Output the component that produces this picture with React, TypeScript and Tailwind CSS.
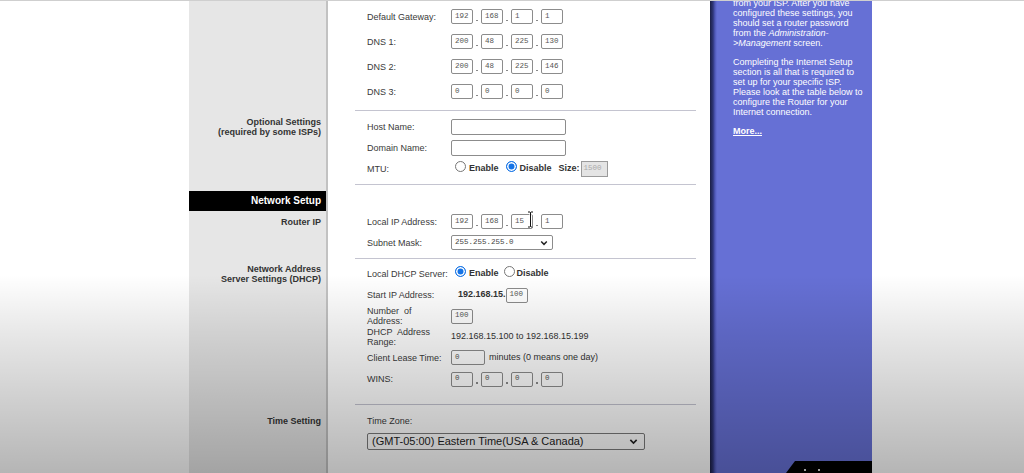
import type { ReactNode } from "react";

const MONO = "font-['Liberation_Mono',monospace]";

function IpBox({ v, w = "w-[22px]" }: { v: string; w?: string }) {
  return (
    <span className={`flex items-center ${w} h-[15px] border border-[#8c8c8c] rounded-[2px] bg-white pl-[3px] ${MONO} text-[7.5px] text-[#555] leading-none`}>
      {v}
    </span>
  );
}

function Ip({ parts, cursor }: { parts: string[]; cursor?: boolean }) {
  return (
    <div className="flex items-center">
      {parts.map((p, i) => (
        <div key={i} className="flex items-center">
          {i > 0 && (
            <span className="w-[8px] h-[15px] flex items-end justify-center pb-[3px]">
              <span className="w-[1.5px] h-[1.5px] bg-[#8a8a8a]" />
            </span>
          )}
          <div className="relative">
            <IpBox v={p} />
            {cursor && i === 2 && (
              <svg className="absolute left-[16px] top-[-3px]" width="7" height="17" viewBox="0 0 7 17">
                <path d="M1 1h2l.5.5L4 1h2M3.5 1.5v14M1 16h2l.5-.5.5.5h2" fill="none" stroke="#fff" strokeWidth="2.2" />
                <path d="M1 1h2l.5.5L4 1h2M3.5 1.5v14M1 16h2l.5-.5.5.5h2" fill="none" stroke="#111" strokeWidth="1" />
              </svg>
            )}
          </div>
        </div>
      ))}
    </div>
  );
}

function Radio({ on }: { on?: boolean }) {
  return on ? (
    <span className="inline-block w-[11px] h-[11px] rounded-full bg-[#1473e6] border border-[#1473e6] shadow-[inset_0_0_0_1.5px_#ffffff]" />
  ) : (
    <span className="inline-block w-[11px] h-[11px] rounded-full bg-white border border-[#767676]" />
  );
}

function Row({ label, h, children }: { label: ReactNode; h: string; children?: ReactNode }) {
  return (
    <div className={`flex items-center ${h} pl-[39px]`}>
      <div className="w-[84px] shrink-0 text-[9px] leading-[10px] text-[#3a3a3a]">{label}</div>
      {children}
    </div>
  );
}

function Sep({ mt }: { mt: string }) {
  return <div className={`${mt} ml-[27px] w-[341px] h-px bg-[#c4c4d0]`} />;
}

function Left({ children, className = "" }: { children?: ReactNode; className?: string }) {
  return (
    <div className={`w-[139px] shrink-0 bg-[#e6e6e6] border-r-2 border-[#c2c2c2] text-right text-[9px] leading-[10px] font-bold text-[#333] ${className}`}>
      {children}
    </div>
  );
}

function Chevron({ size = 8 }: { size?: number }) {
  return (
    <svg width={size} height={size} viewBox="0 0 10 10">
      <path d="M1.5 3.2 5 6.7 8.5 3.2" fill="none" stroke="#222" strokeWidth="1.8" />
    </svg>
  );
}

export default function App() {
  return (
    <div className="relative w-[1024px] h-[473px] overflow-hidden bg-white border-t border-[#cfcfcf] font-['Liberation_Sans',Arial,sans-serif]">
      <div className="flex h-full">
        <div className="w-[189px] shrink-0" />

        {/* settings table */}
        <div className="w-[521px] shrink-0 flex flex-col">
          {/* internet settings */}
          <div className="flex">
            <Left />
            <div className="w-[382px] pt-[3px]">
              <Row label="Default Gateway:" h="h-[25px]"><Ip parts={["192", "168", "1", "1"]} /></Row>
              <Row label="DNS 1:" h="h-[25px]"><Ip parts={["200", "48", "225", "130"]} /></Row>
              <Row label="DNS 2:" h="h-[25px]"><Ip parts={["200", "48", "225", "146"]} /></Row>
              <Row label="DNS 3:" h="h-[25px]"><Ip parts={["0", "0", "0", "0"]} /></Row>
              <Sep mt="mt-[6px]" />
            </div>
          </div>

          {/* optional settings */}
          <div className="flex">
            <Left className="pt-[6px] pr-[5px]">
              <div>Optional Settings</div>
              <div>(required by some ISPs)</div>
            </Left>
            <div className="w-[382px] pt-[5px]">
              <Row label="Host Name:" h="h-[21px]">
                <span className="w-[115px] h-[16px] border border-[#8c8c8c] rounded-[2px] bg-white" />
              </Row>
              <Row label="Domain Name:" h="h-[21px]">
                <span className="w-[115px] h-[16px] border border-[#8c8c8c] rounded-[2px] bg-white" />
              </Row>
              <Row label="MTU:" h="h-[21px]">
                <div className="flex items-center text-[9px] font-bold text-[#333]">
                  <span className="ml-[4px]"><Radio /></span>
                  <span className="ml-[3px]">Enable</span>
                  <span className="ml-[7px]"><Radio on /></span>
                  <span className="ml-[3px]">Disable</span>
                  <span className="ml-[7px]">Size:</span>
                  <span className={`ml-[1px] flex items-center w-[27px] h-[16px] border border-[#9a9a9a] bg-[#e4e4e4] pl-[2px] ${MONO} text-[7.5px] font-normal text-[#aaa]`}>1500</span>
                </div>
              </Row>
              <Sep mt="mt-[5px]" />
            </div>
          </div>

          {/* network setup / router ip */}
          <div className="flex">
            <Left className="pt-[6px]">
              <div className="h-[20px] bg-black text-white text-[10px] flex items-center justify-end pr-[5px]">Network Setup</div>
              <div className="h-[21px] flex items-center justify-end pr-[5px]">Router IP</div>
            </Left>
            <div className="w-[382px] pt-[26px]">
              <Row label="Local IP Address:" h="h-[21px]"><Ip parts={["192", "168", "15", "1"]} cursor /></Row>
              <Row label="Subnet Mask:" h="h-[21px]">
                <span className={`flex items-center justify-between w-[102px] h-[15px] border border-[#8c8c8c] rounded-[2px] bg-white pl-[3px] pr-[4px] ${MONO} text-[7.5px] text-[#444]`}>
                  255.255.255.0
                  <Chevron />
                </span>
              </Row>
              <Sep mt="mt-[5px]" />
            </div>
          </div>

          {/* dhcp */}
          <div className="flex">
            <Left className="pt-[5px] pr-[5px]">
              <div>Network Address</div>
              <div>Server Settings (DHCP)</div>
            </Left>
            <div className="w-[382px] pt-[4px]">
              <Row label="Local DHCP Server:" h="h-[22px]">
                <div className="flex items-center text-[9px] font-bold text-[#333]">
                  <span className="ml-[4px]"><Radio on /></span>
                  <span className="ml-[3px]">Enable</span>
                  <span className="ml-[5px]"><Radio /></span>
                  <span className="ml-[2px]">Disable</span>
                </div>
              </Row>
              <Row label="Start IP Address:" h="h-[20px]">
                <span className="ml-[7px] text-[9px] font-bold text-[#333]">192.168.15.</span>
                <IpBox v="100" />
              </Row>
              <Row label={<>Number&nbsp; of<br />Address:</>} h="h-[22px]">
                <IpBox v="100" />
              </Row>
              <Row label={<>DHCP&nbsp; Address<br />Range:</>} h="h-[20px]">
                <span className="text-[9px] text-[#333]">192.168.15.100 to 192.168.15.199</span>
              </Row>
              <Row label="Client Lease Time:" h="h-[21px]">
                <IpBox v="0" w="w-[34px]" />
                <span className="ml-[4px] text-[9px] text-[#333]">minutes (0 means one day)</span>
              </Row>
              <Row label="WINS:" h="h-[22px]"><Ip parts={["0", "0", "0", "0"]} /></Row>
              <Sep mt="mt-[14px]" />
            </div>
          </div>

          {/* time */}
          <div className="flex flex-1">
            <Left className="pt-[11px] pr-[5px]">Time Setting</Left>
            <div className="w-[382px] pt-[11px] pl-[39px]">
              <div className="text-[9px] leading-[10px] text-[#3a3a3a]">Time Zone:</div>
              <div className="mt-[7px] w-[278px] h-[17px] flex items-center justify-between border border-[#7a7a7a] rounded-[2px] bg-white pl-[4px] pr-[6px] text-[11px] text-[#222]">
                (GMT-05:00) Eastern Time(USA &amp; Canada)
                <Chevron size={9} />
              </div>
            </div>
          </div>
        </div>

        {/* help panel */}
        <div className="w-[162px] shrink-0 flex flex-col bg-[linear-gradient(to_right,#1b1f45_0px,#2f3678_3px,#4f58b8_5px,#6670d5_7px,#6670d5_100%)] text-white text-[9px] leading-[10px] pl-[23px]">
          <div className="-mt-[3px] whitespace-nowrap">
            <div>from your ISP. After you have</div>
            <div>configured these settings, you</div>
            <div>should set a router password</div>
            <div>from the <i>Administration-</i></div>
            <div><i>&gt;Management</i> screen.</div>
          </div>
          <div className="mt-[9px] whitespace-nowrap">
            <div>Completing the Internet Setup</div>
            <div>section is all that is required to</div>
            <div>set up for your specific ISP.</div>
            <div>Please look at the table below to</div>
            <div>configure the Router for your</div>
            <div>Internet connection.</div>
          </div>
          <div className="mt-[9px] font-bold underline">More...</div>
          <div className="mt-auto flex justify-end">
            <svg width="86" height="12" viewBox="0 0 86 12">
              <polygon points="9,0 86,0 86,12 0,12" fill="#000" />
              <rect x="18" y="8" width="2" height="2" fill="#ddd" />
              <rect x="32" y="8" width="2" height="2" fill="#ddd" />
            </svg>
          </div>
        </div>

        <div className="flex-1" />
      </div>

      {/* lighting falloff of the captured frame */}
      <div className="absolute inset-0 pointer-events-none bg-[linear-gradient(to_bottom,rgba(0,0,0,0)_0%,rgba(0,0,0,0)_58%,rgba(0,0,0,0.09)_70%,rgba(0,0,0,0.29)_100%)]" />
    </div>
  );
}
